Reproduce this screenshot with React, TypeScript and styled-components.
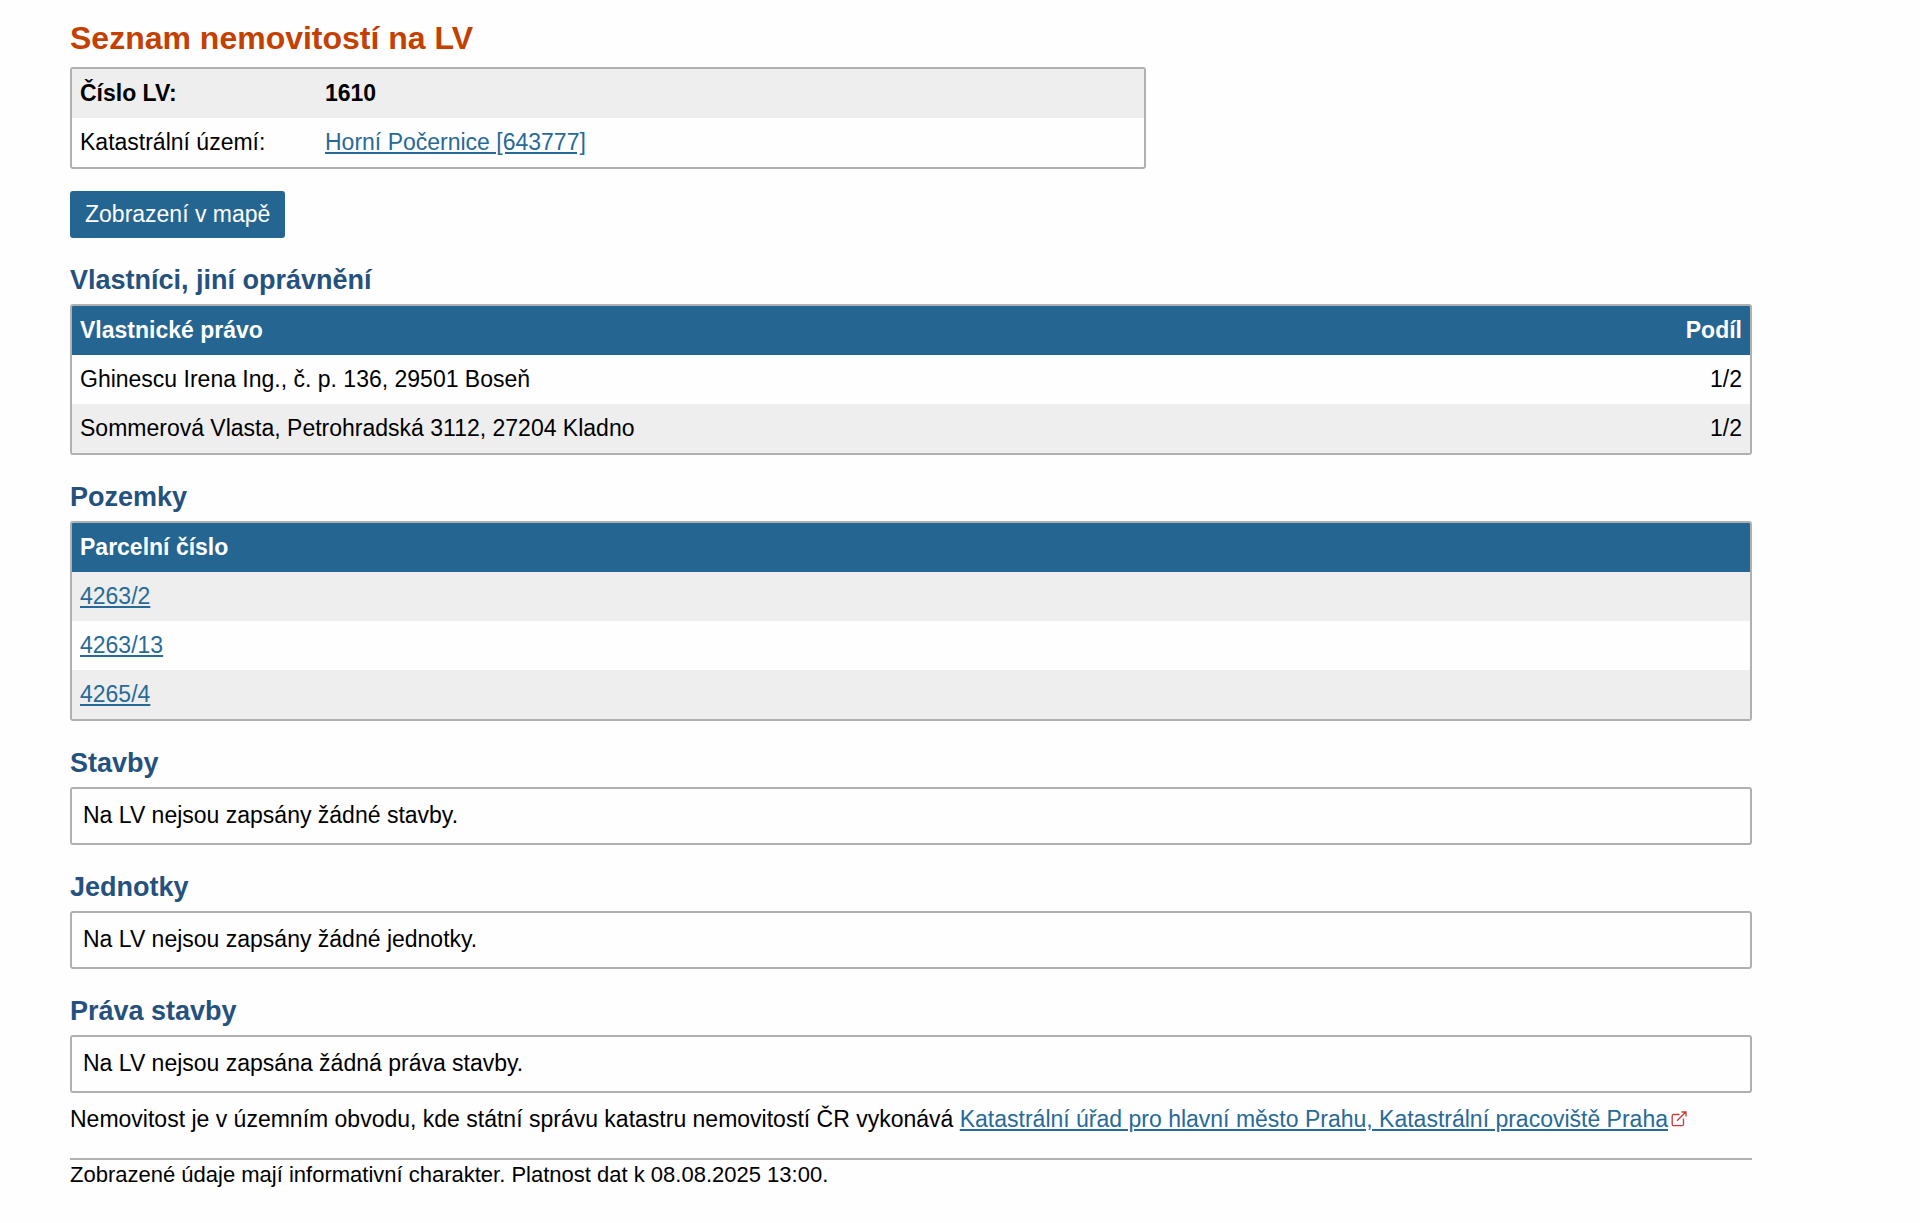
import React from "react";
import styled, { createGlobalStyle } from "styled-components";

const line = "#b0b0b0";
const brand = "#256591";
const linkColor = "#286a97";
const stripe = "#eeeeee";

const GlobalStyle = createGlobalStyle`
  *, *::before, *::after { box-sizing: border-box; }
  body {
    margin: 0;
    background: #fefefe;
    color: #000;
    font: 23px/29px Arial, "Liberation Sans", sans-serif;
  }
`;

const Page = styled.main`
  margin: 0 168px 0 70px;
  padding-top: 16px;
`;

const Title = styled.h1`
  margin: 0;
  padding-bottom: 7px;
  font-size: 32px;
  line-height: 44px;
  color: #c44000;
`;

const Section = styled.section`
  margin-top: 25px;
`;

const SectionTitle = styled.h2`
  margin: 0;
  padding-bottom: 7px;
  font-size: 27px;
  line-height: 34px;
  color: #24517d;
`;

const Frame = styled.div<{ $share?: string }>`
  width: ${(p) => p.$share ?? "100%"};
  border: 2px solid ${line};
  border-radius: 3px;
  overflow: hidden;
`;

const Table = styled.table`
  width: 100%;
  border-collapse: collapse;
`;

const Row = styled.tr<{ $striped?: boolean; $strong?: boolean }>`
  background: ${(p) => (p.$striped ? stripe : "transparent")};
  font-weight: ${(p) => (p.$strong ? "bold" : "normal")};
`;

const HeadRow = styled.tr`
  background: ${brand};
  color: #fff;
`;

const Head = styled.th<{ $end?: boolean }>`
  padding: 10px 8px;
  text-align: ${(p) => (p.$end ? "right" : "left")};
`;

const Label = styled.th`
  width: 245px;
  padding: 10px 8px;
  text-align: left;
  font-weight: inherit;
`;

const Cell = styled.td<{ $end?: boolean }>`
  padding: 10px 8px;
  text-align: ${(p) => (p.$end ? "right" : "left")};
`;

const Link = styled.a`
  color: ${linkColor};
  text-decoration: underline;
`;

const MapButton = styled.button`
  display: block;
  margin-top: 22px;
  padding: 9px 15px;
  border: 0;
  border-radius: 3px;
  background: ${brand};
  color: #fff;
  font: inherit;
  cursor: pointer;
`;

const Notice = styled.p`
  margin: 0;
  padding: 12px 11px 13px;
  border: 2px solid ${line};
  border-radius: 3px;
`;

const Office = styled.p`
  margin: 12px 0 24px;
`;

const ExternalIcon = styled.svg`
  width: 16px;
  height: 16px;
  margin-left: 3px;
`;

const Footer = styled.footer`
  border-top: 2px solid ${line};
  font-size: 22px;
`;

const owners = [
  { name: "Ghinescu Irena Ing., č. p. 136, 29501 Boseň", share: "1/2" },
  { name: "Sommerová Vlasta, Petrohradská 3112, 27204 Kladno", share: "1/2" },
];

const parcels = ["4263/2", "4263/13", "4265/4"];

const notices = [
  { title: "Stavby", text: "Na LV nejsou zapsány žádné stavby." },
  { title: "Jednotky", text: "Na LV nejsou zapsány žádné jednotky." },
  { title: "Práva stavby", text: "Na LV nejsou zapsána žádná práva stavby." },
];

export default function App() {
  return (
    <>
      <GlobalStyle />
      <Page>
        <Title>Seznam nemovitostí na LV</Title>
        <Frame $share="64%">
          <Table>
            <tbody>
              <Row $striped $strong>
                <Label scope="row">Číslo LV:</Label>
                <Cell>1610</Cell>
              </Row>
              <Row>
                <Label scope="row">Katastrální území:</Label>
                <Cell>
                  <Link href="#uzemi">Horní Počernice [643777]</Link>
                </Cell>
              </Row>
            </tbody>
          </Table>
        </Frame>
        <MapButton type="button">Zobrazení v mapě</MapButton>

        <Section>
          <SectionTitle>Vlastníci, jiní oprávnění</SectionTitle>
          <Frame>
            <Table>
              <thead>
                <HeadRow>
                  <Head scope="col">Vlastnické právo</Head>
                  <Head scope="col" $end>Podíl</Head>
                </HeadRow>
              </thead>
              <tbody>
                {owners.map((owner, i) => (
                  <Row key={owner.name} $striped={i % 2 === 1}>
                    <Cell>{owner.name}</Cell>
                    <Cell $end>{owner.share}</Cell>
                  </Row>
                ))}
              </tbody>
            </Table>
          </Frame>
        </Section>

        <Section>
          <SectionTitle>Pozemky</SectionTitle>
          <Frame>
            <Table>
              <thead>
                <HeadRow>
                  <Head scope="col">Parcelní číslo</Head>
                </HeadRow>
              </thead>
              <tbody>
                {parcels.map((parcel, i) => (
                  <Row key={parcel} $striped={i % 2 === 0}>
                    <Cell>
                      <Link href="#parcela">{parcel}</Link>
                    </Cell>
                  </Row>
                ))}
              </tbody>
            </Table>
          </Frame>
        </Section>

        {notices.map((notice) => (
          <Section key={notice.title}>
            <SectionTitle>{notice.title}</SectionTitle>
            <Notice>{notice.text}</Notice>
          </Section>
        ))}

        <Office>
          Nemovitost je v územním obvodu, kde státní správu katastru nemovitostí ČR vykonává{" "}
          <Link href="#urad">Katastrální úřad pro hlavní město Prahu, Katastrální pracoviště Praha</Link>
          <ExternalIcon viewBox="0 0 16 16" fill="none" stroke="#c8383c" strokeWidth="1.3" aria-hidden="true">
            <path d="M8.5 3.5H2.7Q1.2 3.5 1.2 5v8.2q0 1.5 1.5 1.5h8.300q1.500 0 1.500-1.500V7.500M6 9.800 14.600 1.200M10.500 1h4.500v4.500" />
          </ExternalIcon>
        </Office>
        <Footer>Zobrazené údaje mají informativní charakter. Platnost dat k 08.08.2025 13:00.</Footer>
      </Page>
    </>
  );
}
